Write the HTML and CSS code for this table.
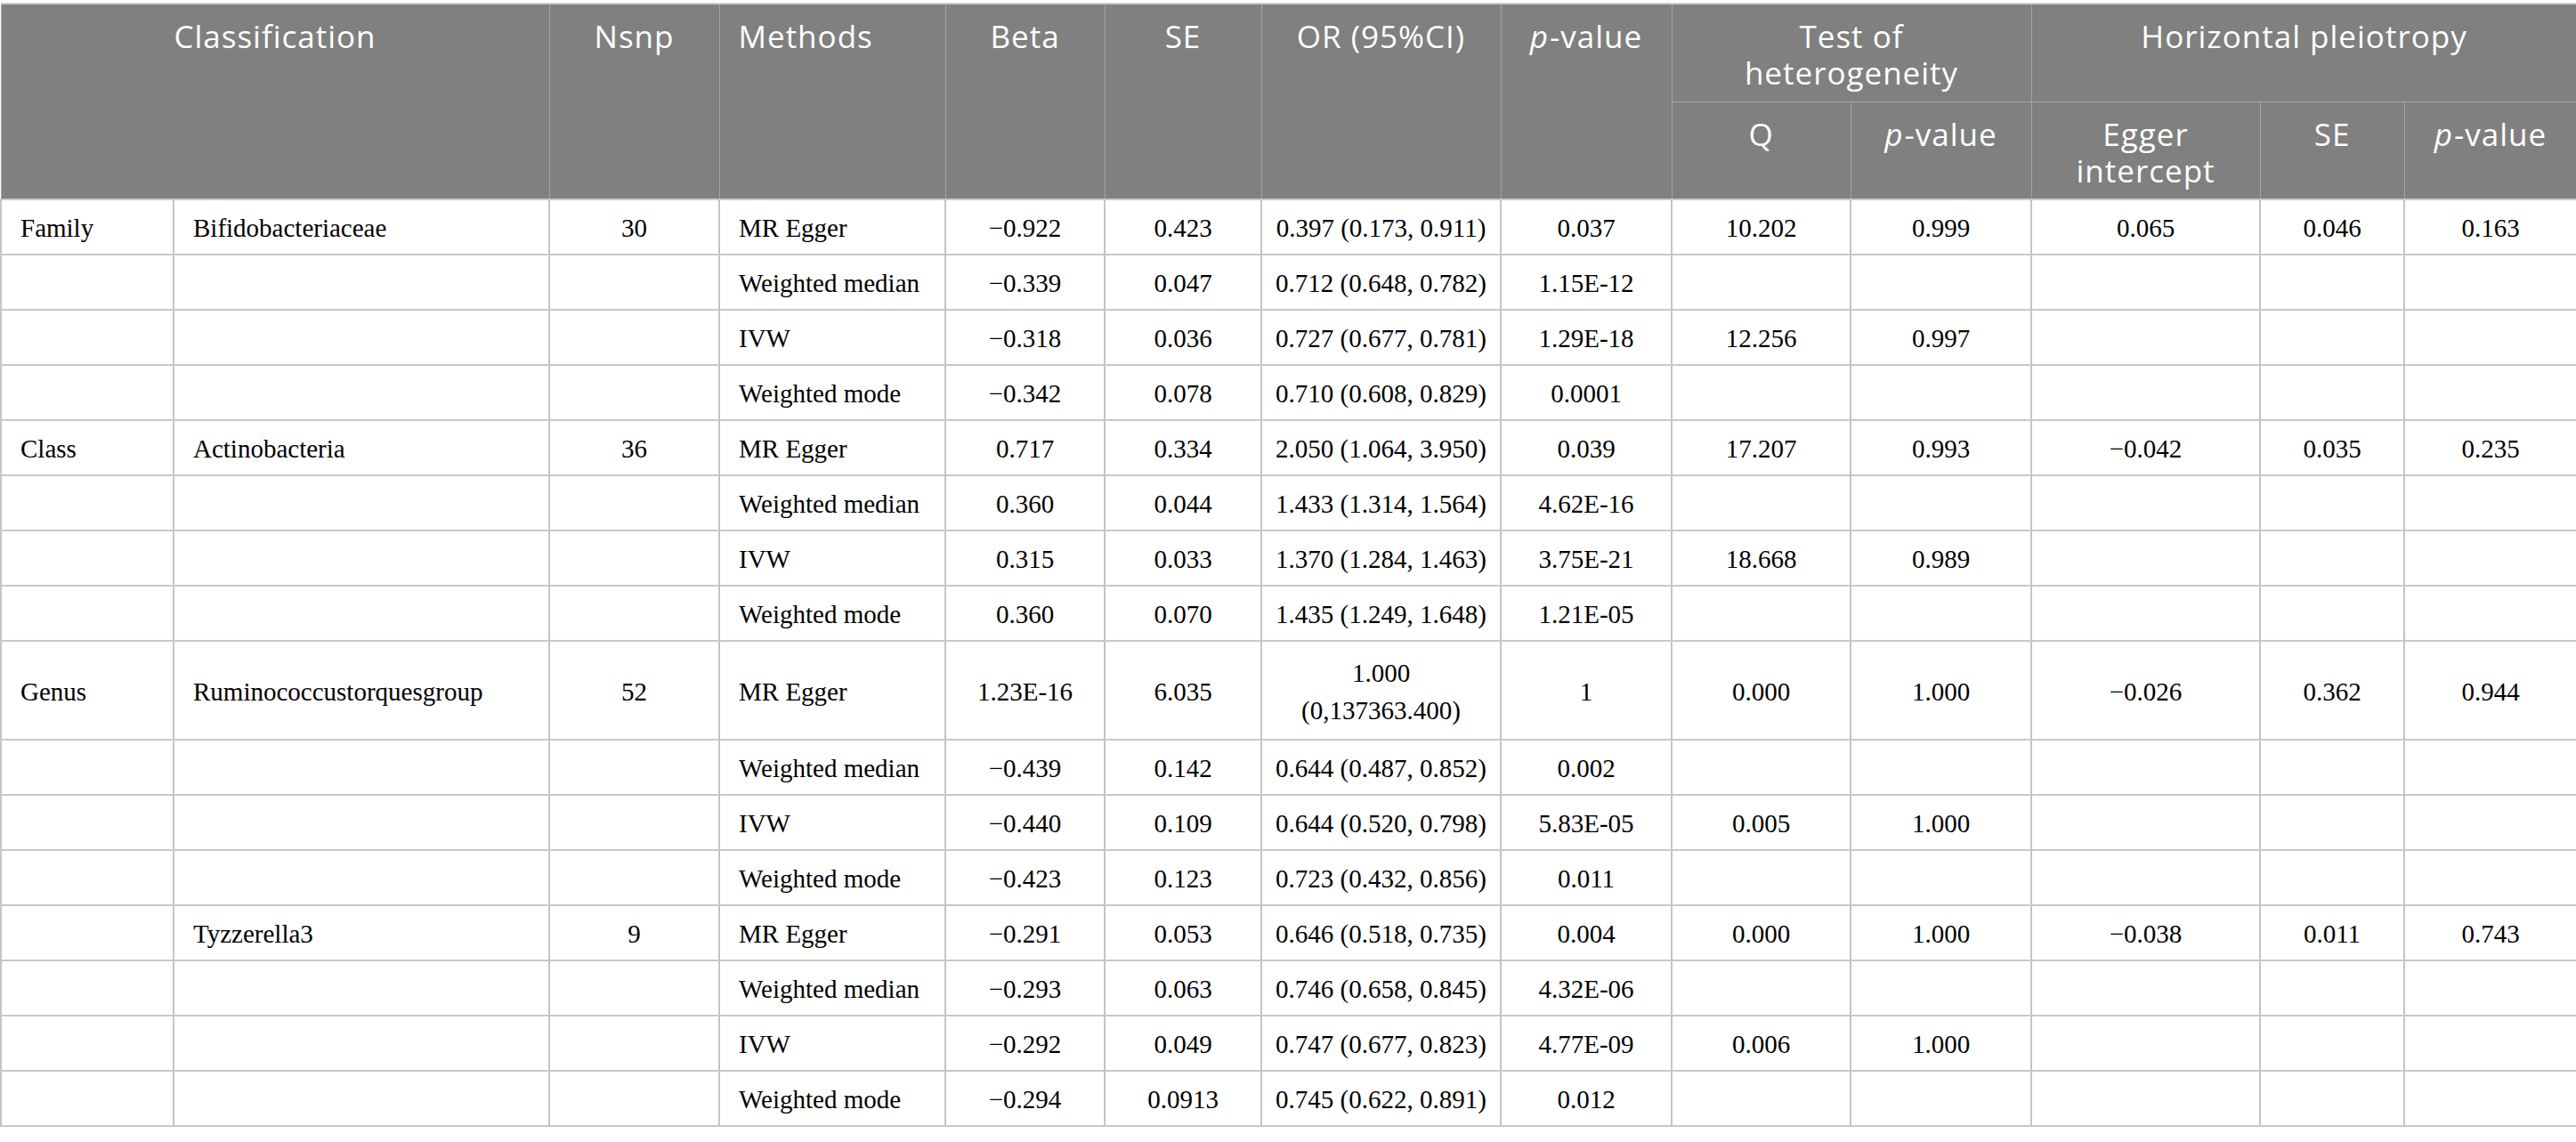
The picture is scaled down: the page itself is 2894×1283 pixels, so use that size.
FILE: index.html
```html
<!DOCTYPE html>
<html lang="en">
<head>
  <meta charset="UTF-8" />
  <title>MR results</title>
  <link rel="stylesheet" href="styles.css">
</head>
<body>
  <table class="results">
    <colgroup>
      <col style="width:194px"><col style="width:422px"><col style="width:191px"><col style="width:254px">
      <col style="width:179px"><col style="width:176px"><col style="width:269px"><col style="width:192px">
      <col style="width:201px"><col style="width:203px"><col style="width:257px"><col style="width:162px">
      <col style="width:194px">
    </colgroup>
    <thead>
      <tr class="head-top">
        <th colspan="2" rowspan="2">Classification</th>
        <th rowspan="2">Nsnp</th>
        <th rowspan="2" class="left">Methods</th>
        <th rowspan="2">Beta</th>
        <th rowspan="2">SE</th>
        <th rowspan="2">OR (95%CI)</th>
        <th rowspan="2"><i>p</i>-value</th>
        <th colspan="2">Test of heterogeneity</th>
        <th colspan="3">Horizontal pleiotropy</th>
      </tr>
      <tr class="head-sub">
        <th>Q</th>
        <th><i>p</i>-value</th>
        <th>Egger intercept</th>
        <th>SE</th>
        <th><i>p</i>-value</th>
      </tr>
    </thead>
    <tbody>
      <!-- Bifidobacteriaceae -->
      <tr>
        <td class="left">Family</td><td class="left">Bifidobacteriaceae</td><td>30</td><td class="left">MR Egger</td>
        <td>&minus;0.922</td><td>0.423</td><td>0.397 (0.173, 0.911)</td><td>0.037</td>
        <td>10.202</td><td>0.999</td><td>0.065</td><td>0.046</td><td>0.163</td>
      </tr>
      <tr>
        <td></td><td></td><td></td><td class="left">Weighted median</td>
        <td>&minus;0.339</td><td>0.047</td><td>0.712 (0.648, 0.782)</td><td>1.15E-12</td>
        <td></td><td></td><td></td><td></td><td></td>
      </tr>
      <tr>
        <td></td><td></td><td></td><td class="left">IVW</td>
        <td>&minus;0.318</td><td>0.036</td><td>0.727 (0.677, 0.781)</td><td>1.29E-18</td>
        <td>12.256</td><td>0.997</td><td></td><td></td><td></td>
      </tr>
      <tr>
        <td></td><td></td><td></td><td class="left">Weighted mode</td>
        <td>&minus;0.342</td><td>0.078</td><td>0.710 (0.608, 0.829)</td><td>0.0001</td>
        <td></td><td></td><td></td><td></td><td></td>
      </tr>

      <!-- Actinobacteria -->
      <tr>
        <td class="left">Class</td><td class="left">Actinobacteria</td><td>36</td><td class="left">MR Egger</td>
        <td>0.717</td><td>0.334</td><td>2.050 (1.064, 3.950)</td><td>0.039</td>
        <td>17.207</td><td>0.993</td><td>&minus;0.042</td><td>0.035</td><td>0.235</td>
      </tr>
      <tr>
        <td></td><td></td><td></td><td class="left">Weighted median</td>
        <td>0.360</td><td>0.044</td><td>1.433 (1.314, 1.564)</td><td>4.62E-16</td>
        <td></td><td></td><td></td><td></td><td></td>
      </tr>
      <tr>
        <td></td><td></td><td></td><td class="left">IVW</td>
        <td>0.315</td><td>0.033</td><td>1.370 (1.284, 1.463)</td><td>3.75E-21</td>
        <td>18.668</td><td>0.989</td><td></td><td></td><td></td>
      </tr>
      <tr>
        <td></td><td></td><td></td><td class="left">Weighted mode</td>
        <td>0.360</td><td>0.070</td><td>1.435 (1.249, 1.648)</td><td>1.21E-05</td>
        <td></td><td></td><td></td><td></td><td></td>
      </tr>

      <!-- Ruminococcus torques group -->
      <tr class="tall">
        <td class="left">Genus</td><td class="left">Ruminococcustorquesgroup</td><td>52</td><td class="left">MR Egger</td>
        <td>1.23E-16</td><td>6.035</td><td>1.000<br>(0,137363.400)</td><td>1</td>
        <td>0.000</td><td>1.000</td><td>&minus;0.026</td><td>0.362</td><td>0.944</td>
      </tr>
      <tr>
        <td></td><td></td><td></td><td class="left">Weighted median</td>
        <td>&minus;0.439</td><td>0.142</td><td>0.644 (0.487, 0.852)</td><td>0.002</td>
        <td></td><td></td><td></td><td></td><td></td>
      </tr>
      <tr>
        <td></td><td></td><td></td><td class="left">IVW</td>
        <td>&minus;0.440</td><td>0.109</td><td>0.644 (0.520, 0.798)</td><td>5.83E-05</td>
        <td>0.005</td><td>1.000</td><td></td><td></td><td></td>
      </tr>
      <tr>
        <td></td><td></td><td></td><td class="left">Weighted mode</td>
        <td>&minus;0.423</td><td>0.123</td><td>0.723 (0.432, 0.856)</td><td>0.011</td>
        <td></td><td></td><td></td><td></td><td></td>
      </tr>

      <!-- Tyzzerella 3 -->
      <tr>
        <td></td><td class="left">Tyzzerella3</td><td>9</td><td class="left">MR Egger</td>
        <td>&minus;0.291</td><td>0.053</td><td>0.646 (0.518, 0.735)</td><td>0.004</td>
        <td>0.000</td><td>1.000</td><td>&minus;0.038</td><td>0.011</td><td>0.743</td>
      </tr>
      <tr>
        <td></td><td></td><td></td><td class="left">Weighted median</td>
        <td>&minus;0.293</td><td>0.063</td><td>0.746 (0.658, 0.845)</td><td>4.32E-06</td>
        <td></td><td></td><td></td><td></td><td></td>
      </tr>
      <tr>
        <td></td><td></td><td></td><td class="left">IVW</td>
        <td>&minus;0.292</td><td>0.049</td><td>0.747 (0.677, 0.823)</td><td>4.77E-09</td>
        <td>0.006</td><td>1.000</td><td></td><td></td><td></td>
      </tr>
      <tr>
        <td></td><td></td><td></td><td class="left">Weighted mode</td>
        <td>&minus;0.294</td><td>0.0913</td><td>0.745 (0.622, 0.891)</td><td>0.012</td>
        <td></td><td></td><td></td><td></td><td></td>
      </tr>
    </tbody>
  </table>
</body>
</html>
```

FILE: styles.css
```css
* { margin: 0; padding: 0; box-sizing: border-box; }

body {
  background: #ffffff;
  padding-top: 3px;
}

.results {
  width: 2894px;
  table-layout: fixed;
  border-collapse: collapse;
  border-top: 2px solid #cfcfcf;
}

.results th {
  background: #7f807f;
  color: #ffffff;
  font-family: 'Open Sans', sans-serif;
  font-size: 35px;
  line-height: 41px;
  font-weight: 400;
  letter-spacing: 1px;
  text-align: center;
  vertical-align: top;
  padding: 15px 20px 0;
  border: 1px solid #a4a4a4;
}

.results th i {
  letter-spacing: 2px;
}

.head-top { height: 110px; }
.head-sub { height: 110px; }

.results td {
  font-family: 'Liberation Serif', serif;
  font-size: 29px;
  line-height: 42px;
  color: #000000;
  text-align: center;
  vertical-align: middle;
  white-space: nowrap;
  padding: 2px 6px 0;
  border-top: 2px solid #c8c8c8;
  border-bottom: 2px solid #c8c8c8;
  border-left: 2px solid #c4c4c4;
  border-right: 2px solid #c4c4c4;
}

.results tbody tr { height: 62px; }
.results tbody tr.tall { height: 111px; }

.results .left {
  text-align: left;
  padding-left: 21px;
}
```
